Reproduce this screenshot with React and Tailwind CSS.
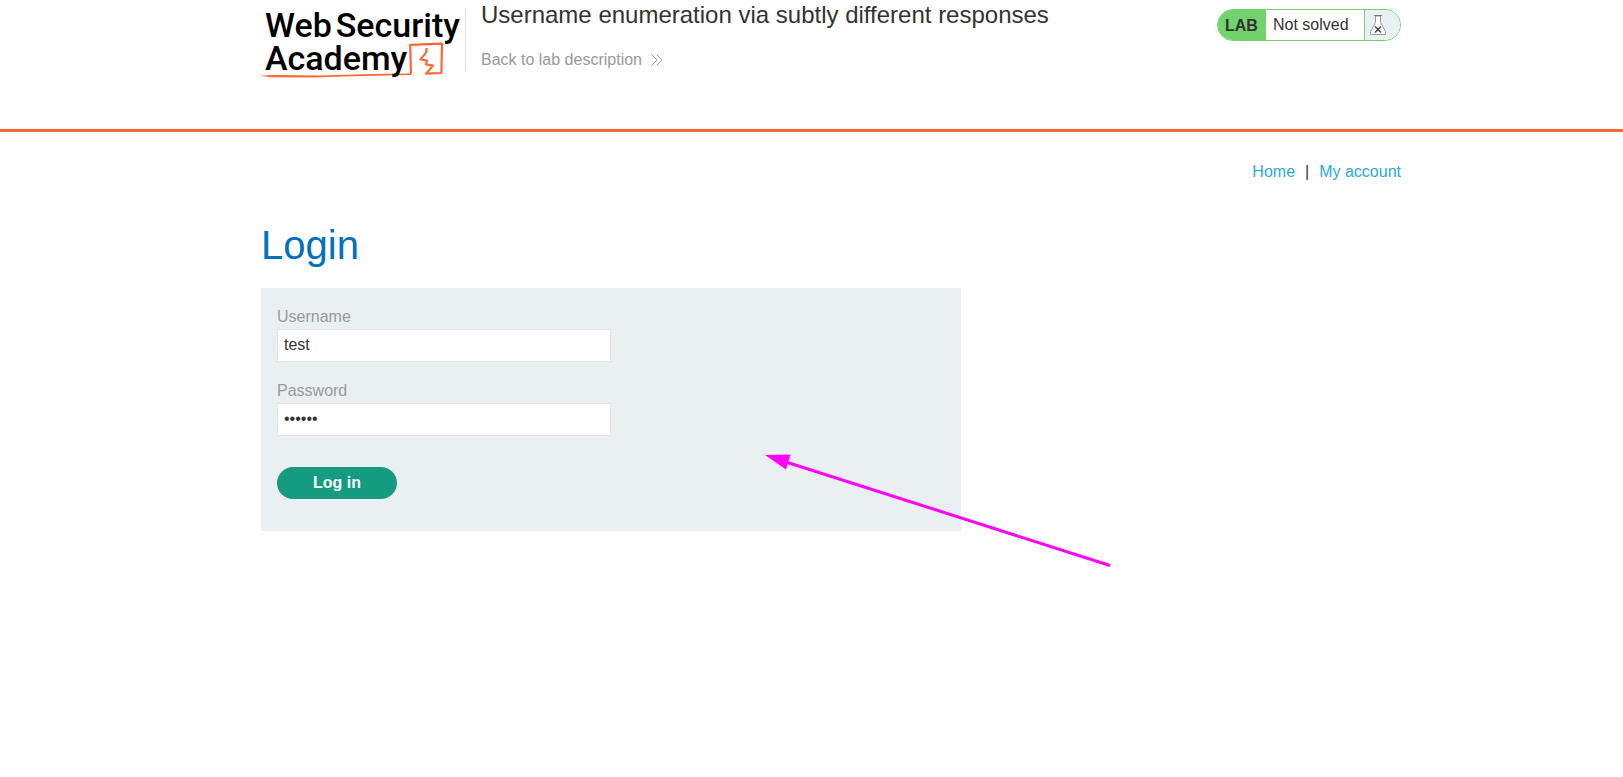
function Logo() {
  return (
    <a href="#academy" aria-label="Web Security Academy" className="relative block h-[70px] w-[204px] shrink-0 text-black">
      <svg className="absolute inset-0" width="204" height="70" viewBox="0 0 204 70" fill="none" aria-hidden="true">
        <path d="M0 66.4 L12 66 L60 66.6 L110 65 L150 64.4 L150 66 L100 67 L50 68.4 L8 68.2Z" fill="#ff6633" />
        <path
          d="M150 65.4 L149.2 35.8 L181 34.6 L180.4 64 L165 64.6 L172 56.6 L165 55.4 L166 51.6 L159.4 50.4 L165.2 43.6 L165.6 39"
          stroke="#ff6633"
          strokeWidth="2.2"
          strokeLinejoin="round"
        />
      </svg>
      <span className="relative flex gap-1 pl-1 font-[Roboto,sans-serif] text-[34px] leading-[33px] font-medium">
        <span>Web</span>
        <span>Security</span>
      </span>
      <span className="relative block pl-1 font-[Roboto,sans-serif] text-[34px] leading-[33px] font-medium">
        Academy
      </span>
    </a>
  );
}

function Chevrons() {
  return (
    <svg width="12" height="12" viewBox="0 0 12 12" fill="none" stroke="#999999" aria-hidden="true">
      <path d="M0.5 0.5 L6 6 L0.5 11.5 M5.5 0.5 L11 6 L5.5 11.5" />
    </svg>
  );
}

function Flask() {
  return (
    <svg width="18" height="20" viewBox="0 0 18 20" fill="none" aria-hidden="true">
      <path d="M6.5 1 V7.5 L1.5 16.5 V19.5 H16.5 V16.5 L11.5 7.5 V1Z" fill="#ffffff" stroke="#999999" />
      <path d="M5 0.5 H13" stroke="#777777" />
      <path d="M6 11.5 L12 17.5 M12 11.5 L6 17.5" stroke="#444444" strokeWidth="1.5" />
    </svg>
  );
}

function LabStatus() {
  return (
    <div className="flex h-8 w-[184px] shrink-0 overflow-hidden rounded-full border border-[#72d26d] bg-white text-base">
      <strong className="flex w-12 items-center bg-[#72d26d] pt-px pl-[7px]">LAB</strong>
      <span className="flex-1 pl-[7px] leading-[29px]">Not solved</span>
      <span className="flex w-9 items-center border-l border-[#72d26d] bg-[#eaeff2] pl-1">
        <Flask />
      </span>
    </div>
  );
}

function Field({ id, label, type, value }) {
  return (
    <div className="flex flex-col">
      <label htmlFor={id} className="leading-[25px] text-[#999999]">{label}</label>
      <input
        id={id}
        name={id}
        type={type}
        defaultValue={value}
        className="h-[33px] w-full max-w-[334px] border border-[#e4e4e4] bg-white px-1.5 pb-0.5 text-base text-[#333332] outline-none"
      />
    </div>
  );
}

function Arrow() {
  return (
    <svg className="pointer-events-none absolute top-[166px] left-[503px]" width="350" height="116" viewBox="0 0 350 116" aria-hidden="true">
      <path d="M22 8 L346 111.5" stroke="#ff00ff" strokeWidth="3" />
      <path d="M1 1 L26.5 0.5 L22 15.5Z" fill="#ff00ff" />
    </svg>
  );
}

export default function App() {
  return (
    <div className="min-h-screen bg-white font-['Liberation_Sans',Arial,sans-serif] text-base text-[#333332]">
      <header className="border-b-3 border-[#ff6633]">
        <div className="mx-auto flex max-w-[1181px] items-start pr-px pb-[50px] pl-10">
          <div className="flex pt-[9px]">
            <Logo />
            <div className="h-[62px] w-px bg-[#e3e3e3]" />
          </div>
          <div className="flex-1 pl-[15px]">
            <h2 className="text-2xl leading-[30px]">Username enumeration via subtly different responses</h2>
            <a href="#description" className="mt-[18px] inline-flex items-center gap-[9px] text-[#999999]">
              Back to lab description
              <Chevrons />
            </a>
          </div>
          <div className="pt-[9px]">
            <LabStatus />
          </div>
        </div>
      </header>

      <main className="mx-auto max-w-[1181px] pt-7 pr-px pl-10">
        <nav className="flex justify-end gap-2.5 leading-6">
          <a href="#home" className="text-[#29abe2]">Home</a>
          <span>|</span>
          <a href="#account" className="text-[#29abe2]">My account</a>
        </nav>
        <h1 className="mt-10 text-[40px] leading-[42px] text-[#0071bc]">Login</h1>
        <section className="relative mt-[22px]">
          <form className="flex max-w-[700px] flex-col gap-4 bg-[#eaeff2] px-4 pt-4 pb-8">
            <Field id="username" label="Username" type="text" value="test" />
            <Field id="password" label="Password" type="password" value="peters" />
            <button type="button" className="mt-[15px] h-8 w-[120px] rounded-full bg-[#159b7f] font-bold text-white">
              Log in
            </button>
          </form>
          <Arrow />
        </section>
      </main>
    </div>
  );
}
